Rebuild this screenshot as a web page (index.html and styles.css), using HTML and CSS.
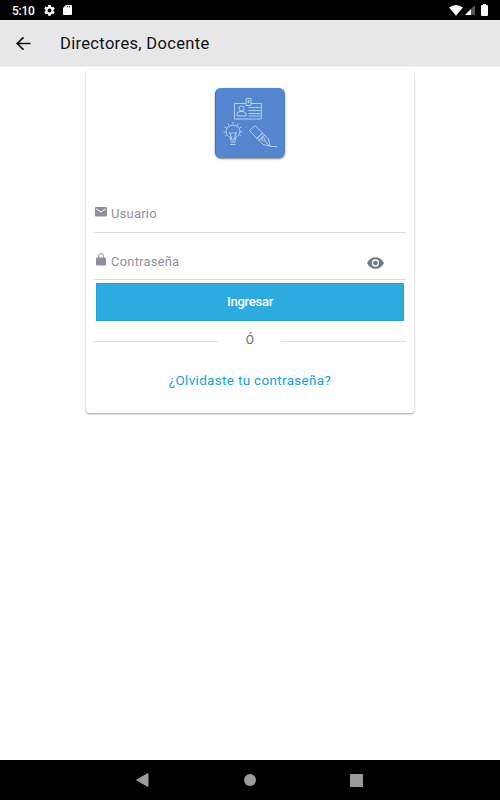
FILE: index.html
```html
<!DOCTYPE html>
<html lang="es">
<head>
<meta charset="utf-8">
<title>Directores, Docente</title>
<link rel="stylesheet" href="styles.css">
</head>
<body>
<div class="status">
  <span class="time">5:10</span>
  <svg class="gear" width="11" height="11" viewBox="2 2 20 20"><path fill="#fff" d="M19.14 12.94c.04-.3.06-.61.06-.94 0-.32-.02-.64-.07-.94l2.03-1.58a.49.49 0 0 0 .12-.61l-1.92-3.32a.49.49 0 0 0-.59-.22l-2.39.96a7 7 0 0 0-1.62-.94l-.36-2.54A.48.48 0 0 0 13.92 2h-3.84a.47.47 0 0 0-.47.41l-.36 2.54c-.59.24-1.13.57-1.62.94l-2.39-.96a.48.48 0 0 0-.59.22L2.74 8.87a.48.48 0 0 0 .12.61l2.03 1.58a6 6 0 0 0-.02 1.88l-2.03 1.58a.49.49 0 0 0-.12.61l1.92 3.32c.12.22.37.29.59.22l2.39-.96c.5.38 1.03.7 1.62.94l.36 2.54c.05.24.24.41.48.41h3.84c.24 0 .44-.17.47-.41l.36-2.54a7 7 0 0 0 1.62-.94l2.39.96c.22.08.47 0 .59-.22l1.92-3.32a.47.47 0 0 0-.12-.61zM12 15.6a3.6 3.6 0 1 1 0-7.2 3.6 3.6 0 0 1 0 7.2z"/></svg>
  <svg class="sd" width="9" height="10" viewBox="0 0 9 10"><path fill="#fff" d="M3 0h5q1 0 1 1v8q0 1-1 1H1q-1 0-1-1V3z"/><path stroke="#000" d="M4.500 1v1.500M6.500 1v1.500" stroke-width=".7"/></svg>
  <svg class="wifi" width="14" height="11" viewBox="0 0 14 11"><path fill="#fff" d="M0 2.6Q7-2.4 14 2.6L7 10.8z"/></svg>
  <svg class="signal" width="10" height="10" viewBox="0 0 10 10"><path fill="#555" d="M10 0v10H0z"/><path fill="#fff" d="M6 4v6H0z"/></svg>
  <svg class="battery" width="7" height="12" viewBox="0 0 7 12"><path fill="#fff" d="M2 0h3v1h1q1 0 1 1v9q0 1-1 1H1q-1 0-1-1V2q0-1 1-1h1z"/></svg>
</div>
<header class="bar">
  <svg width="16" height="16" viewBox="0 0 16 16" fill="none" stroke="#111" stroke-width="1.7"><path d="M15.500 8.500H2.500M8.500 2.300L2.200 8.500l6.300 6.200"/></svg>
  <h1>Directores, Docente</h1>
</header>
<main>
  <section class="card">
    <div class="logo">
      <svg width="70" height="70" viewBox="0 0 70 70" fill="none" stroke="#c3d8f4" stroke-width=".9">
        <path d="M31 15.500H19.500v15.500h27V15.500H36"/>
        <path d="M31 10.500h5v7h-5zM33 12.500h1v2h-1z"/>
        <circle cx="26.500" cy="20.500" r="2.500"/>
        <path d="M22 28v-2q0-2 3-2.500h3q3 .5 3 2.500v2zM33.500 19.500h12M33.500 22.500h12M33.500 25.500h12M33.500 28h12"/>
        <path d="M15.500 52v-2.500q-4.500-2-4.500-6.500t7-6q7 1.500 7 6t-4.500 6.500V52zM15.500 54h5M15.500 56.500h5M17 51l-2.500-6.500 2.500 1 1-1 1 1 2.500-1L19 51"/>
        <path d="M18 34v2M13 35.500l1 2M23 35.500l-1 2M9.500 39l2 1M26.500 39l-2 1M8.500 44h2M25.500 44h2M10 48l1.500-1M26 48l-1.500-1"/>
        <path d="M34.500 42.500l5.500-5 7.500 7.500-5.500 5.500zM42 50.500l5.500-5.500 2 2-5.500 5.500zM44 52.500l5.500-5.500 4 4 1.500 7-7-1.500zM54.500 58L49 52M55 58.500h7"/>
        <circle cx="48.500" cy="51.500" r="1.500"/>
      </svg>
    </div>
    <div class="field user">
      <svg class="mail" width="12" height="10" viewBox="0 0 12 10"><rect width="12" height="9.500" rx="1" fill="#8e919c"/><path d="M1.200 1.800L6 5l4.800-3.200" fill="none" stroke="#fff" stroke-width="1"/></svg>
      <span>Usuario</span>
    </div>
    <div class="field pass">
      <svg class="lock" width="10" height="13" viewBox="0 0 10 13"><rect y="4.500" width="10" height="8" rx="1" fill="#8e919c"/><path d="M2.500 5V3.200a2.500 2.500 0 0 1 5 0V5" fill="none" stroke="#8e919c" stroke-width="1"/></svg>
      <span>Contraseña</span>
      <svg class="eye" width="17" height="12" viewBox="0 0 17 12"><path d="M0 6Q3 .2 8.500.2T17 6q-3 5.800-8.500 5.800T0 6z" fill="#707b86"/><circle cx="8.500" cy="6" r="3" fill="#707b86" stroke="#fff" stroke-width="1.300"/></svg>
    </div>
    <button class="enter">Ingresar</button>
    <div class="or"><i></i><span>Ó</span><i></i></div>
    <a class="forgot">¿Olvidaste tu contraseña?</a>
  </section>
</main>
<nav>
  <svg width="13" height="14" viewBox="0 0 13 14"><path d="M.5 7L12 .5v13z" fill="#9b9b9b" stroke="#9b9b9b" stroke-linejoin="round"/></svg>
  <svg width="12" height="12" viewBox="0 0 12 12"><circle cx="6" cy="6" r="6" fill="#9b9b9b"/></svg>
  <svg width="13" height="13" viewBox="0 0 13 13"><rect width="13" height="13" rx="1" fill="#9b9b9b"/></svg>
</nav>
</body>
</html>
```
FILE: styles.css
```css
* { box-sizing: border-box; }
body {
  margin: 0;
  width: 500px;
  height: 800px;
  display: flex;
  flex-direction: column;
  background: #fff;
  font-family: Roboto, sans-serif;
}
svg { display: block; flex: none; }
.status {
  height: 20px;
  background: #000;
  color: #fff;
  display: flex;
  align-items: center;
  padding: 0 12px;
}
.time { width: 32px; font-size: 12px; font-weight: 500; line-height: 20px; letter-spacing: -.3px; padding-top: 1px; }
.sd { margin-left: 8px; }
.wifi { margin-left: auto; }
.signal { margin-left: 2px; }
.battery { margin-left: 6px; }
.bar {
  height: 47px;
  background: #e6e7e9;
  border-bottom: 1px solid #eeeff0;
  display: flex;
  align-items: center;
  padding-left: 15px;
}
.bar h1 {
  margin: 2px 0 0 29px;
  font-size: 16.5px;
  line-height: 20px;
  font-weight: 450;
  letter-spacing: .33px;
  color: #111;
  white-space: nowrap;
}
main { flex: 1; padding-top: 3px; }
.card {
  width: 328px;
  height: 343px;
  margin: 0 auto;
  padding: 17.5px 8px 0;
  border-radius: 3px;
  background: #fff;
  box-shadow: 0 1px 2px rgba(0,0,0,.38);
  display: flex;
  flex-direction: column;
}
.logo {
  width: 70px;
  height: 70px;
  margin: 0 auto;
  border-radius: 6px;
  background: #5486cf;
  border-left: 1px solid #2080d4;
  box-shadow: 0 1px 2px rgba(0,0,0,.5);
}
.logo svg { margin-left: -1px; }
.field {
  display: flex;
  width: 312px;
  border-bottom: 1px solid #dcdcdc;
  color: #8e919c;
  font-size: 13px;
  line-height: 16px;
  letter-spacing: .2px;
}
.user { height: 27px; margin-top: 48.5px; }
.pass { height: 47px; padding-top: 21px; }
.mail { margin: 1px 4px 0 1px; }
.lock { margin: -1px 5px 0 2px; }
.eye { margin: 3px 22px 0 auto; }
.enter {
  width: 308px;
  height: 38px;
  margin: 3px 0 0 2px;
  padding: 0;
  border: 1px solid #1fa3dd;
  background: #2cabe1;
  color: #fff;
  font: 500 13px/36px Roboto, sans-serif;
  letter-spacing: -.25px;
}
.or {
  display: flex;
  align-items: center;
  height: 18px;
  margin-top: 11px;
  font-size: 12px;
  color: #666;
}
.or i { width: 125px; height: 1px; background: #e0e0e0; margin-top: 1px; }
.or span { flex: 1; text-align: center; margin-top: -2px; }
.forgot {
  margin-top: 20px;
  text-align: center;
  color: #129fdd;
  font-size: 13.5px;
  line-height: 20px;
  letter-spacing: .32px;
}
nav {
  height: 40px;
  background: #000;
  display: flex;
  align-items: center;
  justify-content: space-between;
  padding: 0 137px 0 136px;
}
```
